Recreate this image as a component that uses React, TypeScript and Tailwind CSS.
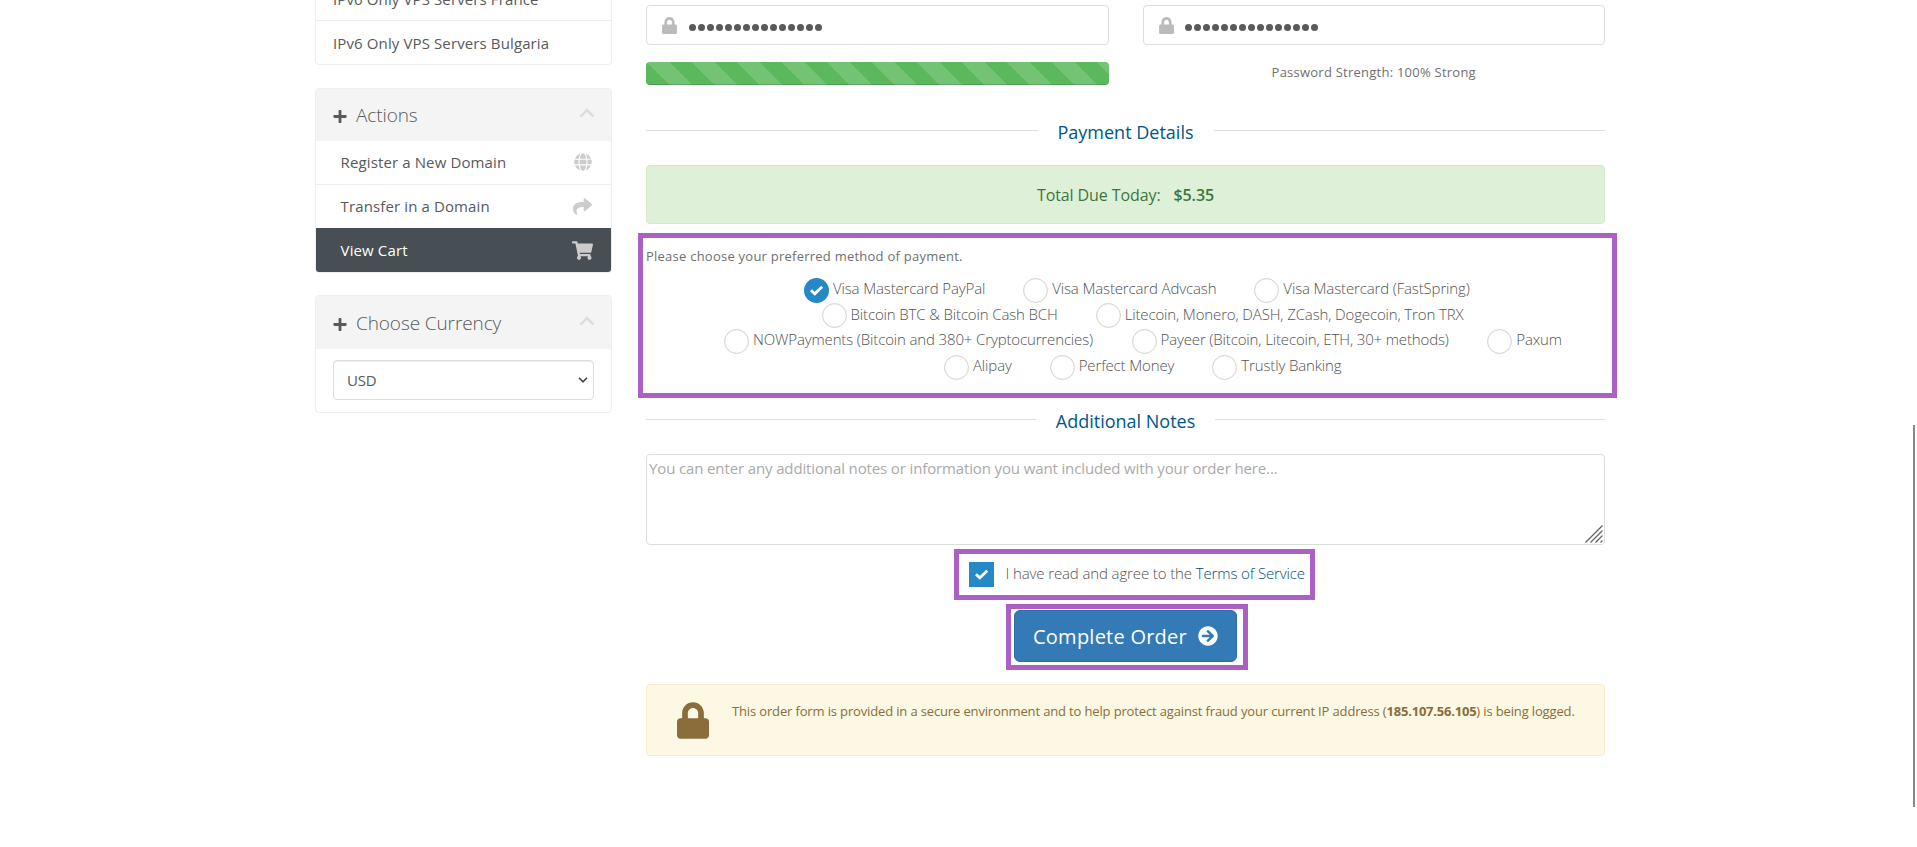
import React from "react";
import { FaPlus, FaGlobe, FaShare, FaShoppingCart, FaLock, FaArrowCircleRight } from "react-icons/fa";

function ChevronUp() {
  return (
    <svg className="mb-[5px] h-[10px] w-[15px]" viewBox="0 0 15 10" fill="none" stroke="#ddd" strokeWidth="2.6">
      <path d="M1.5 8.7 L8 2.2 L14.5 8.7" />
    </svg>
  );
}

function PanelHeading({ title }: { title: string }) {
  return (
    <div className="flex h-[52px] items-center bg-[#f4f4f4] pl-[17px] pr-[17px]">
      <FaPlus className="mt-[2px] h-[15px] w-[14px] text-[#58595b]" />
      <h3 className="ml-[9px] flex-1 text-[19px] font-light leading-6 tracking-[-0.1px]">{title}</h3>
      <ChevronUp />
    </div>
  );
}

function PasswordField() {
  return (
    <div className="flex h-10 flex-1 items-center rounded border border-[#ddd] pl-[15px]">
      <FaLock className="h-[17px] w-[15px] text-[#bbb]" />
      <div className="ml-[11.5px] mt-[4px] flex gap-[2px]">
        {Array.from({ length: 15 }, (_, i) => (
          <span key={i} className="size-[7px] rounded-full bg-[#5a5a5a]" />
        ))}
      </div>
    </div>
  );
}

function SectionTitle({ children }: { children: React.ReactNode }) {
  return (
    <div className="flex h-6 items-center">
      <span className="mb-[3px] h-px flex-1 bg-[#ddd]" />
      <h4 className="px-5 text-[18px] leading-6 text-[#058]">{children}</h4>
      <span className="mb-[3px] h-px flex-1 bg-[#ddd]" />
    </div>
  );
}

function Tick() {
  return (
    <svg className="size-[25px]" viewBox="0 0 25 25" fill="none" stroke="#fff" strokeWidth="2.8">
      <path d="M7 12.2 L10.8 15.8 L18.2 8.8" />
    </svg>
  );
}

function Option({ label, checked }: { label: string; checked?: boolean }) {
  return (
    <label className="flex h-[25px] items-start gap-[4px]">
      {checked ? (
        <span className="size-[25px] rounded-full bg-[#2489c5]">
          <Tick />
        </span>
      ) : (
        <span className="size-[25px] rounded-full border border-[#d8d5cf] shadow-[inset_0_0_1px_#d8d5cf]" />
      )}
      <span className="whitespace-nowrap text-[15px] font-light leading-[20px] tracking-[-0.14px] text-[#525252]">
        {label}
      </span>
    </label>
  );
}

export default function App() {
  return (
    <div className="relative flex h-[847px] w-full items-start overflow-hidden bg-white pl-[315px] font-['Open_Sans',sans-serif] text-[#58595b]">
      <aside className="w-[297px] shrink-0 text-[15px] tracking-[0.12px]">
        <div className="-mt-[24px] h-[89px] overflow-hidden rounded-b border border-[#eee]">
          <div className="flex h-[44px] items-center border-b border-[#eee] pl-[17px] pt-[2px]">IPv6 Only VPS Servers France</div>
          <div className="flex h-[43px] items-center pl-[17px] pt-[2px]">IPv6 Only VPS Servers Bulgaria</div>
        </div>

        <div className="mt-[23px] h-[185px] overflow-hidden rounded border border-[#eee]">
          <PanelHeading title="Actions" />
          <div className="flex h-[44px] items-center justify-between border-b border-[#eee] pl-[24.6px] pr-[19px]">
            Register a New Domain
            <FaGlobe className="mb-px h-[18px] w-[18px] text-[#ccc]" />
          </div>
          <div className="flex h-[43px] items-center justify-between pl-[24.6px] pr-[19px]">
            Transfer in a Domain
            <FaShare className="h-[19px] w-[19px] text-[#ccc]" />
          </div>
          <div className="flex h-[44px] items-center justify-between bg-[#474f54] pl-[24.6px] pr-[18px] text-white">
            View Cart
            <FaShoppingCart className="h-[19px] w-[21px] text-[#ccc]" />
          </div>
        </div>

        <div className="mt-[22px] h-[118px] overflow-hidden rounded border border-[#eee]">
          <div className="bg-[#f4f4f4] pt-px">
            <PanelHeading title="Choose Currency" />
          </div>
          <div className="px-[17px] pt-[11px]">
            <div className="flex h-10 items-center justify-between rounded border border-[#ddd] pl-[13px] pr-[5px] tracking-[-0.2px] shadow-[inset_0_1px_1px_rgba(0,0,0,0.075)]">
              USD
              <svg className="h-[6px] w-[10px]" viewBox="0 0 10 6" fill="none" stroke="#444" strokeWidth="1.6">
                <path d="M1 0.8 L5 4.8 L9 0.8" />
              </svg>
            </div>
          </div>
        </div>
      </aside>

      <main className="ml-[34px] w-[959px] shrink-0">
        <div className="mt-[5px] flex gap-[34px]">
          <PasswordField />
          <PasswordField />
        </div>
        <div className="mt-[17px] flex gap-[34px]">
          <div className="h-[23px] flex-1 rounded bg-[#5cb85c] bg-[linear-gradient(45deg,rgba(255,255,255,.15)_25%,transparent_25%,transparent_50%,rgba(255,255,255,.15)_50%,rgba(255,255,255,.15)_75%,transparent_75%,transparent)] bg-[size:45px_45px] bg-[position:1px_0px] shadow-[inset_0_-1px_0_rgba(0,0,0,.15)]" />
          <div className="flex-1 text-center text-[13px] leading-[21px] tracking-[0.24px] text-[#6f6f6f]">Password Strength: 100% Strong</div>
        </div>

        <div className="mt-[35px]">
          <SectionTitle>Payment Details</SectionTitle>
        </div>

        <div className="mt-[21px] flex h-[59px] items-center justify-center gap-[13px] rounded border border-[#d6e9c6] bg-[#dff0d8] text-[16px] text-[#3c763d]">
          <span className="tracking-[-0.1px]">Total Due Today:</span>
          <strong className="font-semibold tracking-[-0.1px]">$5.35</strong>
        </div>

        <section className="-ml-[8px] mt-[9px] h-[165px] w-[979px] border-[5px] border-[#ab60c6]">
          <p className="ml-[3px] mt-[8px] text-[13px] leading-5 tracking-[0.24px] text-[#6f6f6f]">
            Please choose your preferred method of payment.
          </p>
          <div className="mt-[12px] flex gap-[38px] pl-[161px]">
            <Option label="Visa Mastercard PayPal" checked />
            <Option label="Visa Mastercard Advcash" />
            <Option label="Visa Mastercard (FastSpring)" />
          </div>
          <div className="flex gap-[38px] pl-[178.5px] [&_label>span:last-child]:leading-[22px]">
            <Option label="Bitcoin BTC & Bitcoin Cash BCH" />
            <Option label="Litecoin, Monero, DASH, ZCash, Dogecoin, Tron TRX" />
          </div>
          <div className="mt-px flex gap-[38.5px] pl-[81px]">
            <Option label="NOWPayments (Bitcoin and 380+ Cryptocurrencies)" />
            <Option label="Payeer (Bitcoin, Litecoin, ETH, 30+ methods)" />
            <Option label="Paxum" />
          </div>
          <div className="mt-px flex gap-[38px] pl-[301px]">
            <Option label="Alipay" />
            <Option label="Perfect Money" />
            <Option label="Trustly Banking" />
          </div>
        </section>

        <div className="mt-[11px]">
          <SectionTitle>Additional Notes</SectionTitle>
        </div>

        <div className="mt-[21px] flex h-[91px] justify-between rounded border border-[#ddd] pl-[2px] pr-px">
          <span className="mt-[2px] text-[15px] leading-[22px] tracking-[-0.13px] text-[#aaa]">
            You can enter any additional notes or information you want included with your order here...
          </span>
          <svg className="mb-px size-[18px] self-end" viewBox="0 0 18 18" fill="none" stroke="#62636c" strokeWidth="1.3">
            <path d="M0.5 17.5 L17.5 0.5 M5.5 17.5 L17.5 5.5 M10.5 17.5 L17.5 10.5 M15.5 17.5 L17.5 15.5" />
          </svg>
        </div>

        <div className="ml-[308px] mt-[4px] flex h-[51px] w-[361px] items-start border-[5px] border-[#ab60c6] pl-[10px] pt-[8px]">
          <span className="size-[25px] bg-[#2489c5]">
            <Tick />
          </span>
          <span className="ml-[11.5px] whitespace-nowrap text-[15px] font-light leading-[23px] tracking-[-0.12px] text-[#525252]">
            I have read and agree to the <a className="text-[#004d78]">Terms of Service</a>
          </span>
        </div>

        <div className="ml-[360px] mt-[4px] h-[66px] w-[242px] border-[5px] border-[#ab60c6] pl-[3px] pt-px">
          <button className="flex h-[52px] w-[223px] items-center justify-center gap-[11px] rounded-md border border-[#2e6da4] bg-[#337ab7] pt-px text-[20px] tracking-[0.24px] text-white">
            Complete Order
            <FaArrowCircleRight className="mb-px size-[20px]" />
          </button>
        </div>

        <div className="mt-[14px] flex h-[72px] items-start rounded border border-[#faebcc] bg-[#fcf8e3] pl-[30px] text-[#8a6d3b]">
          <FaLock className="mt-[17px] h-[37px] w-[32px]" />
          <span className="ml-[23px] mt-[15px] whitespace-nowrap text-[13px] leading-[22px] tracking-[-0.145px]">
            This order form is provided in a secure environment and to help protect against fraud your current IP address (
            <strong className="font-bold tracking-[-0.22px]">185.107.56.105</strong>) is being logged.
          </span>
        </div>
      </main>

      <div className="absolute right-[2px] top-[425px] h-[382px] w-[2px] bg-[#888]" />
    </div>
  );
}
